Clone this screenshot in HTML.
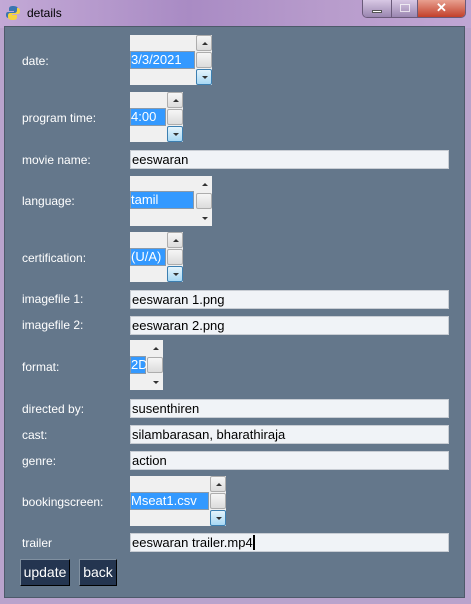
<!DOCTYPE html>
<html><head><meta charset="utf-8"><style>
*{margin:0;padding:0;box-sizing:border-box}
body{width:471px;height:604px;overflow:hidden;background:#b9a3cc;font-family:"Liberation Sans",Arial,sans-serif;font-size:12px;position:relative}
.tb{position:absolute;left:0;top:0;width:471px;height:28px;background:linear-gradient(90deg,#c3a9d6,#a98bc4 40%,#b89ccc 70%,#c0a6d4)}
.client{position:absolute;left:4px;top:26px;width:461px;height:572px;background:#64778b;border:1px solid #4d5a6a}
.lbl{position:absolute;left:22px;color:#fff;font-size:12px}
.ent{position:absolute;left:130px;width:319px;height:19px;background:#f0f3f7;border:1px solid #c8cdd4;color:#000;font-size:13px;padding:1px 0 0 1px;line-height:16px}
.lb{position:absolute;background:#f0f0f0}
.hl{position:absolute;left:0;height:18px;background:#3399ff;color:#fff;font-size:13px;line-height:16px;border:1px solid #8a9aaa}
.sb{position:absolute;top:0;width:16px;height:50px;background:#f0f0f0}
.sb div{position:absolute;left:0;width:16px;height:16px;border:1px solid #adadad;border-radius:2px;background:linear-gradient(#f6f6f6,#dcdcdc)}
.up{top:0}.th{top:17px}.dn{top:34px}
.dn.act{background:linear-gradient(#e5f4fc,#a8d8f4)!important;border-color:#3c7fb1!important}
.up::after{content:"";position:absolute;left:5px;top:6px;border-left:3px solid transparent;border-right:3px solid transparent;border-bottom:3px solid #333}
.dn::after{content:"";position:absolute;left:5px;top:6px;border-left:3px solid transparent;border-right:3px solid transparent;border-top:3px solid #333}
.flat div.up,.flat div.dn{border-color:transparent;background:none}
.btn{position:absolute;top:559px;height:27px;background:#243550;border:1px solid #000;border-top-color:#8090a0;border-left-color:#8090a0;color:#fff;font-size:14px;text-align:center;line-height:24px}
</style></head><body>
<div class="tb"></div>
<svg style="position:absolute;left:5px;top:5px" width="16" height="16" viewBox="0 0 16 16"><path d="M8 1C5 1 4 2 4 4v2h5v1H3C1 7 1 9 1 10c0 2 1 3 3 3V11c0-2 1-3 3-3h4c1 0 2-1 2-2V4c0-2-2-3-5-3z" fill="#3a75b0"/><path d="M8 15c3 0 4-1 4-3v-2H7V9h6c2 0 2-2 2-3 0-2-1-3-3-3v2c0 2-1 3-3 3H5c-1 0-2 1-2 2v2c0 2 2 3 5 3z" fill="#f5d33f"/></svg>
<div style="position:absolute;left:27px;top:6px;font-size:12px;color:#000">details</div>
<div style="position:absolute;left:362px;top:0;width:104px;height:18px;border:1px solid #6a5a7a;border-top:none;border-radius:0 0 5px 5px;overflow:hidden;display:flex">
<div style="width:29px;background:linear-gradient(#d8c8e4,#9a86b0);border-right:1px solid #6a5a7a;position:relative"><div style="position:absolute;left:9px;top:10px;width:10px;height:3px;background:#fff;border:1px solid #555"></div></div>
<div style="width:26px;background:linear-gradient(#d8c8e4,#9a86b0);border-right:1px solid #6a5a7a;position:relative"><div style="position:absolute;left:8px;top:4px;width:10px;height:8px;border:1px solid #fff;opacity:.7"></div></div>
<div style="flex:1;background:linear-gradient(#e8a090,#c2402a);color:#fff;font-weight:bold;text-align:center;font-size:13px;line-height:16px">✕</div></div>
<div class="client"></div>

<div class="lbl" style="top:54px">date:</div>
<div class="lb" style="left:130px;top:35px;width:66px;height:50px"><div class="hl" style="top:16px;width:65px">3/3/2021</div></div>
<div class="sb" style="left:196px;top:35px"><div class="up"></div><div class="th"></div><div class="dn act"></div></div>

<div class="lbl" style="top:111px">program time:</div>
<div class="lb" style="left:130px;top:92px;width:37px;height:50px"><div class="hl" style="top:16px;width:36px">4:00</div></div>
<div class="sb" style="left:167px;top:92px"><div class="up"></div><div class="th"></div><div class="dn act"></div></div>

<div class="lbl" style="top:153px">movie name:</div>
<div class="ent" style="top:150px">eeswaran</div>

<div class="lbl" style="top:194px">language:</div>
<div class="lb" style="left:130px;top:176px;width:66px;height:50px"><div class="hl" style="top:15px;width:64px">tamil</div></div>
<div class="sb flat" style="left:196px;top:176px"><div class="up"></div><div class="th"></div><div class="dn"></div></div>

<div class="lbl" style="top:251px">certification:</div>
<div class="lb" style="left:130px;top:232px;width:37px;height:50px"><div class="hl" style="top:16px;width:36px">(U/A)</div></div>
<div class="sb" style="left:167px;top:232px"><div class="up"></div><div class="th"></div><div class="dn act"></div></div>

<div class="lbl" style="top:292px">imagefile 1:</div>
<div class="ent" style="top:290px">eeswaran 1.png</div>
<div class="lbl" style="top:318px">imagefile 2:</div>
<div class="ent" style="top:316px">eeswaran 2.png</div>

<div class="lbl" style="top:360px">format:</div>
<div class="lb" style="left:130px;top:340px;width:17px;height:50px"><div class="hl" style="top:16px;width:16px">2D</div></div>
<div class="sb flat" style="left:147px;top:340px"><div class="up"></div><div class="th"></div><div class="dn"></div></div>

<div class="lbl" style="top:402px">directed by:</div>
<div class="ent" style="top:399px">susenthiren</div>
<div class="lbl" style="top:428px">cast:</div>
<div class="ent" style="top:425px">silambarasan, bharathiraja</div>
<div class="lbl" style="top:454px">genre:</div>
<div class="ent" style="top:451px">action</div>

<div class="lbl" style="top:495px">bookingscreen:</div>
<div class="lb" style="left:130px;top:476px;width:80px;height:50px"><div class="hl" style="top:16px;width:79px">Mseat1.csv</div></div>
<div class="sb" style="left:210px;top:476px"><div class="up"></div><div class="th"></div><div class="dn act"></div></div>

<div class="lbl" style="top:536px">trailer</div>
<div class="ent" style="top:533px">eeswaran trailer.mp4<span style="display:inline-block;width:2px;height:15px;background:#000;vertical-align:top"></span></div>

<div class="btn" style="left:20px;width:50px">update</div>
<div class="btn" style="left:79px;width:38px">back</div>
</body></html>
